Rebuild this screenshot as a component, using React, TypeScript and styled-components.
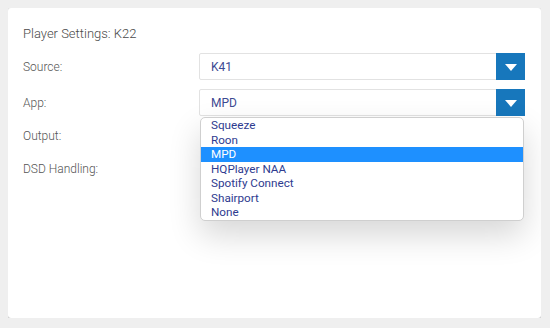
import React from "react";
import styled, { createGlobalStyle } from "styled-components";

const apps = ["Squeeze", "Roon", "MPD", "HQPlayer NAA", "Spotify Connect", "Shairport", "None"];

const App = () => {
  const current = "MPD";
  return (
    <>
      <Global />
      <Card>
        <Title>Player Settings: K22</Title>
        <Form>
          <Row $h={27}>
            <Label>Source:</Label>
            <Select>
              <Value>K41</Value>
              <Arrow>
                <Tri />
              </Arrow>
            </Select>
          </Row>
          <Row $h={27}>
            <Label>App:</Label>
            <Holder>
              <Select>
                <Value>{current}</Value>
                <Arrow>
                  <Tri />
                </Arrow>
              </Select>
              <List>
                {apps.map((a) => (
                  <Item key={a} $active={a === current}>
                    {a}
                  </Item>
                ))}
              </List>
            </Holder>
          </Row>
          <Row $h={21}>
            <Label>Output:</Label>
          </Row>
          <Row $h={27}>
            <Label>DSD Handling:</Label>
          </Row>
        </Form>
      </Card>
    </>
  );
};

export default App;

const Global = createGlobalStyle`
  html, body {
    background: #efefef;
  }
  body {
    margin: 8px 9px 8px 8px;
    font-family: Roboto, "Liberation Sans", sans-serif;
  }
`;

const Card = styled.div`
  background: #fff;
  height: 310px;
  border-radius: 3px;
  box-shadow: 0 1px 3px rgba(0, 0, 0, 0.3);
  box-sizing: border-box;
  padding: 18px 16px 0 15px;
`;

const Title = styled.div`
  font-size: 13px;
  font-weight: 300;
  color: #4a4a4a;
  line-height: 16px;
`;

const Form = styled.div`
  display: flex;
  flex-direction: column;
  gap: 9px;
  margin-top: 11px;
`;

const Row = styled.div<{ $h: number }>`
  display: grid;
  grid-template-columns: 176px 1fr;
  align-items: center;
  height: ${(p) => p.$h}px;
`;

const Label = styled.div`
  font-size: 12px;
  font-weight: 300;
  color: #555;
`;

const Holder = styled.div`
  position: relative;
`;

const Select = styled.div`
  display: flex;
  align-items: stretch;
  height: 27px;
  box-sizing: border-box;
  border: 1px solid #e2e2e2;
  border-radius: 2px;
  background: #fff;
`;

const Value = styled.div`
  flex: 1;
  display: flex;
  align-items: center;
  padding-left: 11px;
  font-size: 12px;
  color: #3d4a92;
`;

const Arrow = styled.div`
  width: 29px;
  margin: -1px -1px -1px 0;
  background: #1777bc;
  display: flex;
  align-items: center;
  justify-content: center;
`;

const Tri = styled.div`
  width: 0;
  height: 0;
  border-left: 6px solid transparent;
  border-right: 6px solid transparent;
  border-top: 7px solid #fff;
  margin-top: 2px;
`;

const List = styled.div`
  position: absolute;
  top: 28px;
  left: 1px;
  right: 1px;
  background: #fff;
  border: 1px solid #cfcfcf;
  border-radius: 5px;
  overflow: hidden;
  box-shadow: 0 14px 32px rgba(0, 0, 0, 0.16);
  z-index: 2;
`;

const Item = styled.div<{ $active: boolean }>`
  font-size: 11.7px;
  line-height: 14.5px;
  padding-left: 10px;
  color: ${(p) => (p.$active ? "#fff" : "#2e3b8f")};
  background: ${(p) => (p.$active ? "#1e90ff" : "transparent")};
`;
